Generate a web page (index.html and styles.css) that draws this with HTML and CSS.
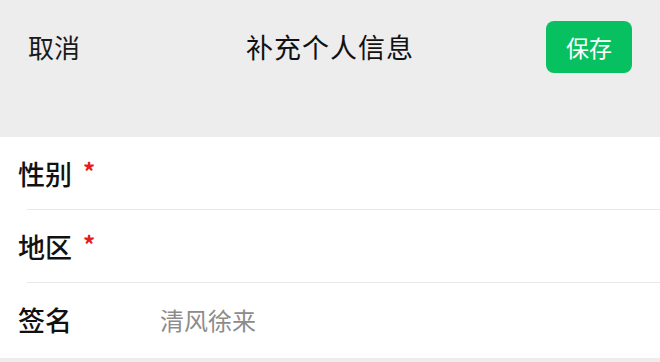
FILE: index.html
```html
<!DOCTYPE html>
<html lang="zh-CN">
<head>
<meta charset="utf-8">
<title>补充个人信息</title>
<link rel="stylesheet" href="styles.css">
</head>
<body>
<div class="page">
  <header class="navbar">
    <span class="cancel">取消</span>
    <span class="title">补充个人信息</span>
    <button class="save">保存</button>
  </header>
  <section class="form">
    <div class="row">
      <span class="label">性别<span class="req">*</span></span>
    </div>
    <div class="row">
      <span class="label">地区<span class="req">*</span></span>
    </div>
    <div class="row last">
      <span class="label">签名</span>
      <span class="value">清风徐来</span>
    </div>
  </section>
</div>
</body>
</html>
```

FILE: styles.css
```css
html, body {
  margin: 0;
  padding: 0;
  background: #ededed;
}
body {
  font-family: "Noto Sans CJK SC", "Noto Sans", sans-serif;
  color: #1a1a1a;
}
.page {
  width: 660px;
  height: 362px;
  overflow: hidden;
}
.navbar {
  height: 137px;
  box-sizing: border-box;
  padding: 21px 28px 0 28px;
  display: flex;
  align-items: flex-start;
  justify-content: space-between;
  position: relative;
}
.cancel {
  font-size: 26px;
  line-height: 52px;
  height: 52px;
  font-weight: 400;
  color: #1a1a1a;
}
.title {
  position: absolute;
  left: 0;
  right: 0;
  top: 21px;
  text-align: center;
  font-size: 27px;
  line-height: 52px;
  font-weight: 400;
  letter-spacing: 1px;
  color: #111111;
}
.save {
  width: 86px;
  height: 52px;
  border: none;
  border-radius: 8px;
  background: #07c160;
  color: #ffffff;
  font-family: inherit;
  font-size: 23px;
  padding: 0;
  position: relative;
  z-index: 1;
}
.form {
  background: #ffffff;
  height: 221px;
}
.row {
  height: 73px;
  display: flex;
  align-items: center;
  padding-left: 18px;
  position: relative;
}
.row::after {
  content: "";
  position: absolute;
  left: 27px;
  right: 0;
  bottom: 0;
  height: 1px;
  background: #e8e8e8;
}
.row.last::after {
  display: none;
}
.label {
  width: 142px;
  font-size: 27px;
  font-weight: 500;
  color: #111111;
  display: flex;
  align-items: center;
}
.req {
  color: #e61b1b;
  font-size: 24px;
  font-weight: 700;
  margin-left: 11px;
  position: relative;
  top: -3px;
}
.value {
  font-size: 24px;
  color: #8c8c8c;
}
```
